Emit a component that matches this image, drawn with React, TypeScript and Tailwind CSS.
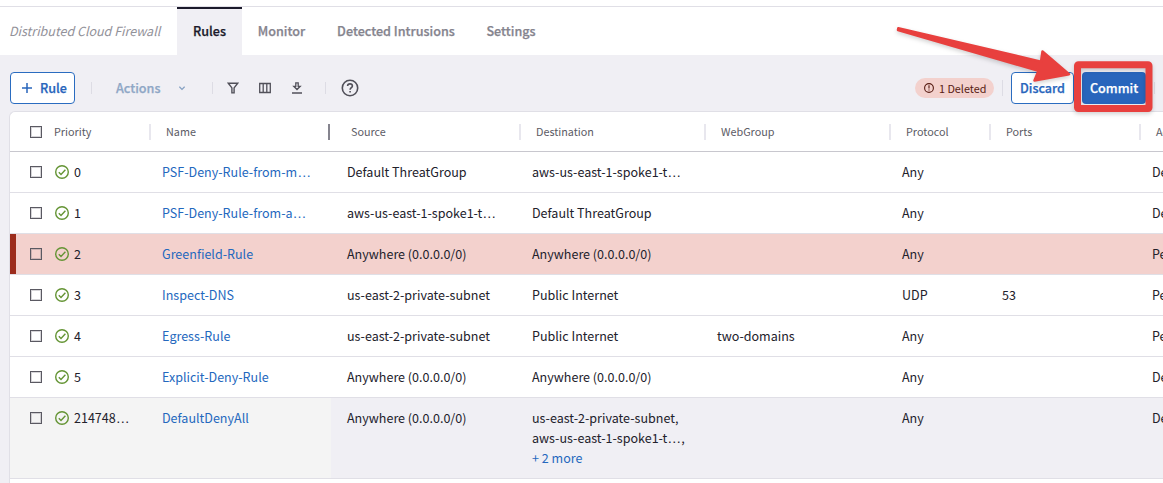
import React from "react";

const columns = "grid grid-cols-[141px_180px_190px_185px_185px_100px_150px_185px]";

type Rule = {
  priority: string;
  name: string;
  source: string;
  destination: string[];
  more?: string;
  webGroup?: string;
  protocol: string;
  ports?: string;
  action: string;
  state?: "deleted" | "default";
};

const rules: Rule[] = [
  { priority: "0", name: "PSF-Deny-Rule-from-m…", source: "Default ThreatGroup", destination: ["aws-us-east-1-spoke1-t…"], protocol: "Any", action: "Deny" },
  { priority: "1", name: "PSF-Deny-Rule-from-a…", source: "aws-us-east-1-spoke1-t…", destination: ["Default ThreatGroup"], protocol: "Any", action: "Deny" },
  { priority: "2", name: "Greenfield-Rule", source: "Anywhere (0.0.0.0/0)", destination: ["Anywhere (0.0.0.0/0)"], protocol: "Any", action: "Permit", state: "deleted" },
  { priority: "3", name: "Inspect-DNS", source: "us-east-2-private-subnet", destination: ["Public Internet"], protocol: "UDP", ports: "53", action: "Permit" },
  { priority: "4", name: "Egress-Rule", source: "us-east-2-private-subnet", destination: ["Public Internet"], webGroup: "two-domains", protocol: "Any", action: "Permit" },
  { priority: "5", name: "Explicit-Deny-Rule", source: "Anywhere (0.0.0.0/0)", destination: ["Anywhere (0.0.0.0/0)"], protocol: "Any", action: "Deny" },
  { priority: "214748…", name: "DefaultDenyAll", source: "Anywhere (0.0.0.0/0)", destination: ["us-east-2-private-subnet,", "aws-us-east-1-spoke1-t…,"], more: "+ 2 more", protocol: "Any", action: "Deny", state: "default" },
];

/* The CJK face centres its ellipsis, so the dots come from a Latin face. */
function Label({ text }: { text: string }) {
  const [head, tail] = text.split("…");
  return (
    <>
      {head}
      {tail !== undefined && <span className="font-['Liberation_Sans',sans-serif] text-[14px] leading-none">…</span>}
      {tail}
    </>
  );
}

function Checkbox() {
  return <span className="block size-3 shrink-0 border border-[#5a5962] shadow-[inset_0_0_0_1px_#5a596240]" />;
}

function CheckCircle() {
  return (
    <svg className="size-3.5 shrink-0" viewBox="0 0 14 14" fill="none" stroke="#649434" strokeWidth="1.4">
      <circle cx="7" cy="7" r="6.3" />
      <path d="M3.8 7.2 6 9.4 10.4 4.7" />
    </svg>
  );
}

function HeaderCell({ children, active, inset = "pl-[15px]" }: { children: string; active?: boolean; inset?: string }) {
  return (
    <div className={`flex items-center justify-between ${inset} ${active ? "pr-px" : ""}`}>
      <span className="pb-0.5">{children}</span>
      <span className={active ? "h-4 w-0.5 bg-[#85848e]" : "h-4 w-0.5 bg-[#e8e7ee]"} />
    </div>
  );
}

function RuleRow({ rule }: { rule: Rule }) {
  const bg = rule.state === "deleted" ? "bg-[#f3d1cd]" : rule.state === "default" ? "bg-[#f0eff4]" : "bg-white";
  const pinned = rule.state === "default" ? "bg-[#f4f4f4]" : "";
  return (
    <div className={`${columns} ${bg} border-b border-[#e0dfe6] ${rule.state === "default" ? "h-[81px]" : "h-[41px]"} text-[12.54px] leading-5 text-[#22212b]`}>
      <div className={`flex ${pinned}`}>
        <span className={`w-1.5 shrink-0 ${rule.state === "deleted" ? "bg-[#9c2c1c]" : ""}`} />
        <span className="flex h-10 items-center pl-3.5">
          <Checkbox />
          <span className="ml-[13px] flex items-center">
            <CheckCircle />
            <span className="ml-[5px]"><Label text={rule.priority} /></span>
          </span>
        </span>
      </div>
      <div className={`pt-2.5 pl-[11px] text-[#2468be] ${pinned}`}><Label text={rule.name} /></div>
      <div className="pt-2.5 pl-4"><Label text={rule.source} /></div>
      <div className="pt-2.5 pl-[11px]">
        {rule.destination.map((d) => <div key={d}><Label text={d} /></div>)}
        {rule.more && <div className="text-[#2468be]">{rule.more}</div>}
      </div>
      <div className="pt-2.5 pl-[11px]">{rule.webGroup}</div>
      <div className="pt-2.5 pl-[11px]">{rule.protocol}</div>
      <div className="pt-2.5 pl-[11px]">{rule.ports}</div>
      <div className="pt-2.5 pl-[11px]">{rule.action}</div>
    </div>
  );
}

function Divider({ className }: { className: string }) {
  return <span className={`w-px shrink-0 bg-[#dddce4] ${className}`} />;
}

export default function App() {
  return (
    <div className="relative flex h-[483px] w-[1163px] flex-col overflow-hidden bg-[#f0eff4] font-['Noto_Sans_CJK_SC',sans-serif] whitespace-nowrap">
      <div className="h-[7px] shrink-0 border-b border-[#e0dfe6] bg-white" />
      <nav className="flex h-12 shrink-0 items-stretch bg-white text-[12.6px] leading-5 font-medium text-[#85848e] [-webkit-text-stroke:0.25px]">
        <span className="flex w-[177px] items-center pb-px pl-[9px] text-[12.5px] font-normal text-[#929199] italic [-webkit-text-stroke:0]">Distributed Cloud Firewall</span>
        <span className="flex w-[65px] items-center justify-center border-t-2 border-[#1b1a2b] bg-[#f0eff4] pb-[3px] text-[#1b1a2b]">Rules</span>
        <span className="flex w-[79px] items-center justify-center pb-px">Monitor</span>
        <span className="flex w-[150px] items-center justify-center pb-px">Detected Intrusions</span>
        <span className="flex w-20 items-center justify-center pb-px">Settings</span>
      </nav>

      <div className="flex h-14 shrink-0 items-center pt-[10px] pl-2.5">
        <button className="flex h-8 w-[65px] items-center rounded border border-[#2a6cc0] bg-white pl-[11px] text-[12.6px] leading-5 font-medium text-[#2865bc] [-webkit-text-stroke:0.25px]">
          <svg className="mr-2 size-2.5" viewBox="0 0 10 10" stroke="currentColor" strokeWidth="1.5"><path d="M5 0v10M0 5h10" /></svg>
          Rule
        </button>
        <Divider className="ml-4 h-3" />
        <span className="ml-6 w-[63px] text-[12.6px] leading-5 font-medium text-[#8fa7c6] [-webkit-text-stroke:0.25px]">Actions</span>
        <svg className="size-1.5" viewBox="0 0 6 6" fill="none" stroke="#85a0c2" strokeWidth="1.2"><path d="M.4 1.7 3 4.3 5.6 1.7" /></svg>
        <Divider className="ml-[27px] h-3" />
        <svg className="ml-[14px] h-3 w-3" viewBox="0 0 12 12" fill="none" stroke="#515059" strokeWidth="1.4"><path d="M1.3 1.2h9.4L7.1 5.9v5H4.9v-5z" /></svg>
        <svg className="ml-5 h-3 w-3" viewBox="0 0 12 12" fill="none" stroke="#515059" strokeWidth="1.3"><path d="M.7 1.5h10.6v9H.7zM4.2 1.5v9M7.8 1.5v9" /></svg>
        <svg className="ml-5 h-3 w-3" viewBox="0 0 12 12" fill="none" stroke="#515059" strokeWidth="1.3"><path d="M4.8.8h2.4v3.5h2L6 7.5 2.8 4.3h2zM1 11h10" /></svg>
        <Divider className="ml-[22px] h-3" />
        <svg className="ml-[15px] size-[18px]" viewBox="0 0 18 18" fill="none" stroke="#515059" strokeWidth="1.6">
          <circle cx="9" cy="9" r="7.7" />
          <path d="M6.6 7.1C6.6 5.7 7.6 4.9 9 4.9s2.4.9 2.4 2.1c0 1.6-2.2 1.7-2.3 3.7M9.1 11.9v1.7" />
        </svg>
        <span className="ml-[556px] flex h-5 w-[79px] items-center rounded-full bg-[#f3d1cd] pl-[9px] text-[10.8px] leading-5 text-[#571c13]">
          <svg className="mr-[5px] size-2.5" viewBox="0 0 10 10" fill="none" stroke="currentColor" strokeWidth="1.1"><circle cx="5" cy="5" r="4.4" /><path d="M5 2.3v3.2M5 6.4v1.2" /></svg>
          <span className="pb-px">1 Deleted</span>
        </span>
        <Divider className="ml-2 h-4" />
        <button className="ml-2 flex h-8 w-[63px] items-center justify-center rounded border border-[#2a6cc0] bg-white text-[12.6px] leading-5 font-medium text-[#2865bc] [-webkit-text-stroke:0.25px]">Discard</button>
        <button className="ml-2 flex h-8 w-16 items-center justify-center rounded bg-[#2865bc] text-[12.6px] leading-5 font-medium text-white [-webkit-text-stroke:0.25px]">Commit</button>
        <Divider className="ml-2 h-3" />
      </div>

      <main className="ml-[9px] h-[372px] w-[1320px] shrink-0 rounded-tl-md border-t border-l border-[#e0dfe6] bg-white">
        <div className={`${columns} h-10 border-b border-[#c8c7ce] text-[10.8px] leading-5 text-[#5c5b65]`}>
          <div className="flex items-center justify-between pl-5">
            <span className="flex items-center"><Checkbox /><span className="ml-3 pb-0.5">Priority</span></span>
            <span className="h-4 w-0.5 bg-[#e8e7ee]" />
          </div>
          <HeaderCell active>Name</HeaderCell>
          <HeaderCell inset="pl-5">Source</HeaderCell>
          <HeaderCell>Destination</HeaderCell>
          <HeaderCell>WebGroup</HeaderCell>
          <HeaderCell>Protocol</HeaderCell>
          <HeaderCell>Ports</HeaderCell>
          <HeaderCell>Action</HeaderCell>
        </div>
        {rules.map((rule) => <RuleRow key={rule.priority} rule={rule} />)}
      </main>

      <svg className="pointer-events-none absolute top-0 left-[880px] h-[130px] w-[283px] drop-shadow-[0_2px_2px_rgba(0,0,0,0.18)]" viewBox="880 0 283 130" fill="none" stroke="#e8403e">
        <path fill="#e8403e" strokeWidth="2.5" strokeLinejoin="round" d="M898.3 28.3 1041 61.6 1042.5 51.5 1069 74.2 1034.5 80.5 1038.5 70.8 898 30z" />
        <rect x="1077.5" y="64.7" width="71.5" height="43.8" rx="1" strokeWidth="7" />
      </svg>
    </div>
  );
}
